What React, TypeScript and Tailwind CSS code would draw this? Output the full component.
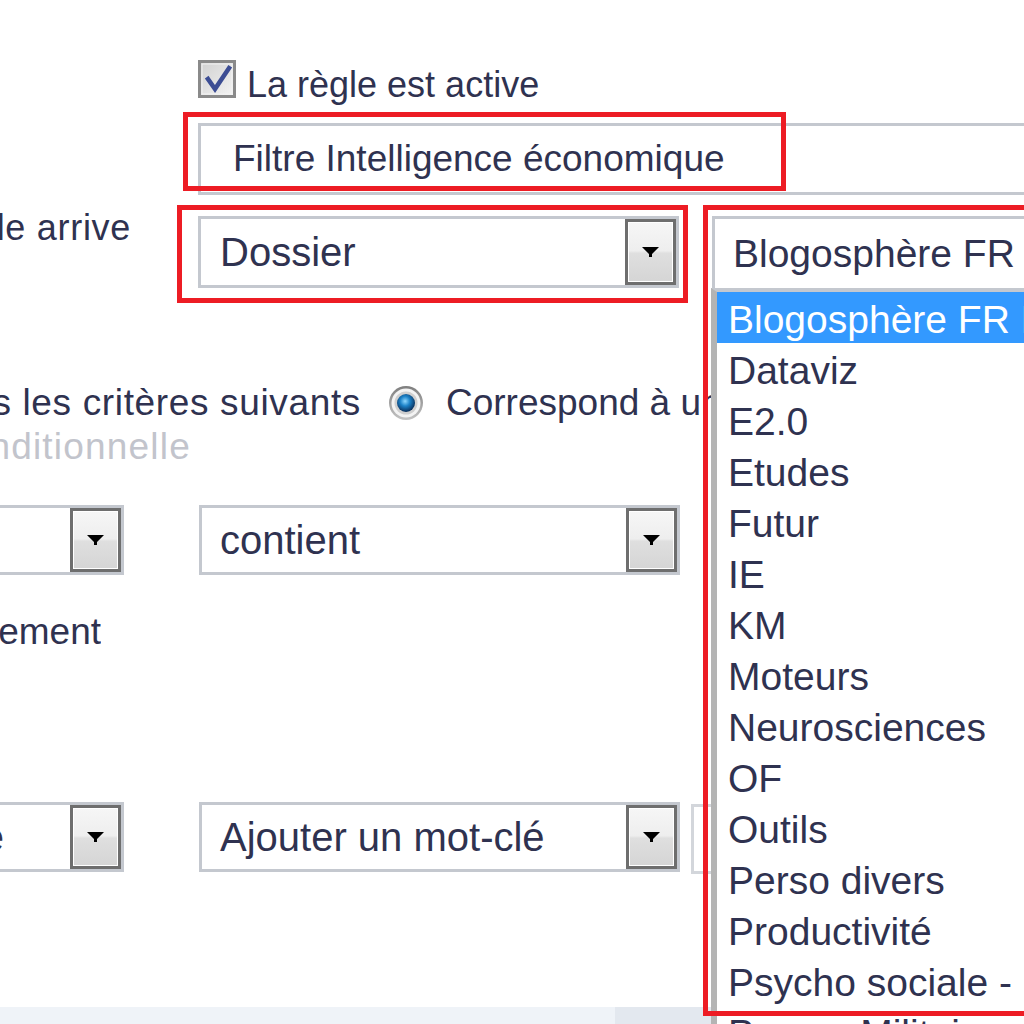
import React from 'react'

const listItems = [
  'Blogosphère FR Blogs',
  'Dataviz',
  'E2.0',
  'Etudes',
  'Futur',
  'IE',
  'KM',
  'Moteurs',
  'Neurosciences',
  'OF',
  'Outils',
  'Perso divers',
  'Productivité',
  'Psycho sociale - RH',
  'Presse Militaire',
]

function ArrowButton() {
  return (
    <div className="flex w-[51px] shrink-0 items-center justify-center border-[3px] border-[#6e6e6e] bg-[linear-gradient(to_bottom,#f6f6f6_0%,#eeeeee_48%,#dfdfdf_52%,#d5d5d5_100%)] shadow-[inset_0_0_0_1px_#ffffff]">
      <svg width="17" height="10" viewBox="0 0 17 10">
        <polygon points="0,0 17,0 10,7 10,10 7,10 7,7" fill="#000000" />
      </svg>
    </div>
  )
}

function Select({ text, className = '', textClassName = '' }: { text: string; className?: string; textClassName?: string }) {
  return (
    <div className={`flex shrink-0 border-[3px] border-[#c4c8cf] bg-white ${className}`}>
      <div className={`flex min-w-0 flex-1 items-center overflow-hidden whitespace-nowrap text-[40px] leading-[46px] text-[#2f3250] ${textClassName}`}>
        {text}
      </div>
      <ArrowButton />
    </div>
  )
}

function Checkbox() {
  return (
    <svg width="38" height="38" viewBox="0 0 38 38" className="shrink-0">
      <defs>
        <linearGradient id="cbg" x1="0" y1="0" x2="1" y2="1">
          <stop offset="0" stopColor="#d0d0d0" />
          <stop offset="1" stopColor="#f4f4f4" />
        </linearGradient>
      </defs>
      <rect x="1.5" y="1.5" width="35" height="35" fill="url(#cbg)" stroke="#8a8a8a" strokeWidth="3" />
      <rect x="4" y="4" width="30" height="30" fill="none" stroke="#f2f2f2" strokeWidth="1" />
      <path d="M10 19 L17 29 L31 8" fill="none" stroke="#3c4d94" strokeWidth="4.5" strokeLinecap="square" />
    </svg>
  )
}

function Radio({ className = '' }: { className?: string }) {
  return (
    <svg width="36" height="36" viewBox="0 0 36 36" className={`shrink-0 ${className}`}>
      <defs>
        <linearGradient id="rring" x1="0" y1="0" x2="0" y2="1">
          <stop offset="0" stopColor="#7e7e7e" />
          <stop offset="1" stopColor="#c4c4c4" />
        </linearGradient>
        <radialGradient id="rdot" cx="0.45" cy="0.4" r="0.6">
          <stop offset="0" stopColor="#8fd8ff" />
          <stop offset="0.45" stopColor="#1c82c8" />
          <stop offset="1" stopColor="#0a2d58" />
        </radialGradient>
      </defs>
      <circle cx="18" cy="18" r="17" fill="url(#rring)" />
      <circle cx="18" cy="18" r="14.5" fill="#f3f3f3" />
      <circle cx="18" cy="18" r="11.5" fill="#cfcfcf" />
      <circle cx="18" cy="18" r="9" fill="url(#rdot)" />
    </svg>
  )
}

export default function App() {
  return (
    <div className="relative h-[1024px] w-[1024px] overflow-hidden bg-white font-['Liberation_Sans',Arial,sans-serif]">
      <div className="flex flex-col">
        {/* active checkbox */}
        <div className="mt-[60px] flex h-[38px] items-start pl-[198px]">
          <Checkbox />
          <span className="ml-[11px] mt-[6px] whitespace-nowrap text-[36px] leading-[38px] text-[#2f3250]">La règle est active</span>
        </div>

        {/* rule name */}
        <div className="mt-[25px] flex h-[72px] pl-[198px]">
          <div className="flex w-[900px] shrink-0 items-center whitespace-nowrap border-[3px] border-[#c4c8cf] bg-white pl-[32px] text-[37px] text-[#2f3250]">
            Filtre Intelligence économique
          </div>
        </div>

        {/* trigger */}
        <div className="mt-[21px] flex items-start">
          <div className="-mt-[8px] flex w-[131px] shrink-0 justify-end overflow-hidden whitespace-nowrap text-[36px] leading-[40px] tracking-[0.7px] text-[#2f3250]">
            Lorsqu'un article arrive
          </div>
          <Select text="Dossier" className="ml-[67px] h-[72px] w-[481px]" textClassName="pl-[19px]" />
          <div className="ml-[33px] flex h-[74px] w-[400px] shrink-0 items-center whitespace-nowrap border-[3px] border-b-0 border-[#c4c8cf] bg-white pl-[18px] text-[39px] text-[#2f3250]">
            Blogosphère FR Blogs
          </div>
        </div>

        {/* match mode */}
        <div className="mt-[95px] flex h-[36px] items-center whitespace-nowrap text-[37px] leading-[44px] text-[#2f3250]">
          <div className="flex w-[361px] shrink-0 justify-end overflow-hidden tracking-[0.65px]">Correspond à tous les critères suivants</div>
          <Radio className="ml-[27px]" />
          <span className="ml-[22px]">Correspond à un des critères suivants</span>
        </div>

        <div className="mt-[6px] flex">
          <div className="flex w-[191px] shrink-0 justify-end overflow-hidden whitespace-nowrap text-[37px] leading-[40px] tracking-[1.2px] text-[#c2c4cc]">
            Règle conditionnelle
          </div>
        </div>

        {/* criteria */}
        <div className="mt-[38px] flex h-[70px]">
          <Select text="Titre" className="-ml-[358px] h-[70px] w-[482px]" textClassName="pl-[19px]" />
          <Select text="contient" className="ml-[75px] h-[70px] w-[481px]" textClassName="pl-[18px]" />
        </div>

        <div className="mt-[37px] flex">
          <div className="flex w-[101px] shrink-0 justify-end overflow-hidden whitespace-nowrap text-[37px] leading-[40px] text-[#2f3250]">
            Classement
          </div>
        </div>

        {/* actions */}
        <div className="mt-[150px] flex h-[70px] items-start">
          <Select text="Mot-clé" className="-ml-[358px] h-[70px] w-[482px]" textClassName="justify-end pr-[66px]" />
          <Select text="Ajouter un mot-clé" className="ml-[75px] h-[70px] w-[481px]" textClassName="pl-[18px]" />
          <div className="ml-[11px] mt-[2px] h-[70px] w-[300px] shrink-0 border-[3px] border-[#d3d6db] bg-white" />
        </div>

        <div className="mt-[135px] flex h-[19px]">
          <div className="w-[615px] bg-[#eff3f8]" />
          <div className="flex-1 bg-[#e3e8ef]" />
        </div>
      </div>

      {/* open folder list */}
      <div className="absolute left-[711px] top-[288px] flex w-[330px] flex-col border-l-[6px] border-t-[4px] border-l-[#b4b4b4] border-t-[#c4c8cf] bg-white">
        {listItems.map((item, i) => (
          <div
            key={item}
            className={`flex h-[51px] shrink-0 items-center whitespace-nowrap pl-[11px] pt-[5px] text-[39px] ${i === 0 ? 'bg-[#3399ff] text-white' : 'text-[#2f3250]'}`}
          >
            {item}
          </div>
        ))}
      </div>

      {/* red highlights */}
      <div className="absolute left-[183px] top-[112px] h-[79px] w-[603px] border-[5px] border-[#ed1c24]" />
      <div className="absolute left-[177px] top-[205px] h-[98px] w-[511px] border-[5px] border-[#ed1c24]" />
      <div className="absolute left-[703px] top-[205px] h-[811px] w-[340px] border-[5px] border-[#ed1c24]" />
    </div>
  )
}
